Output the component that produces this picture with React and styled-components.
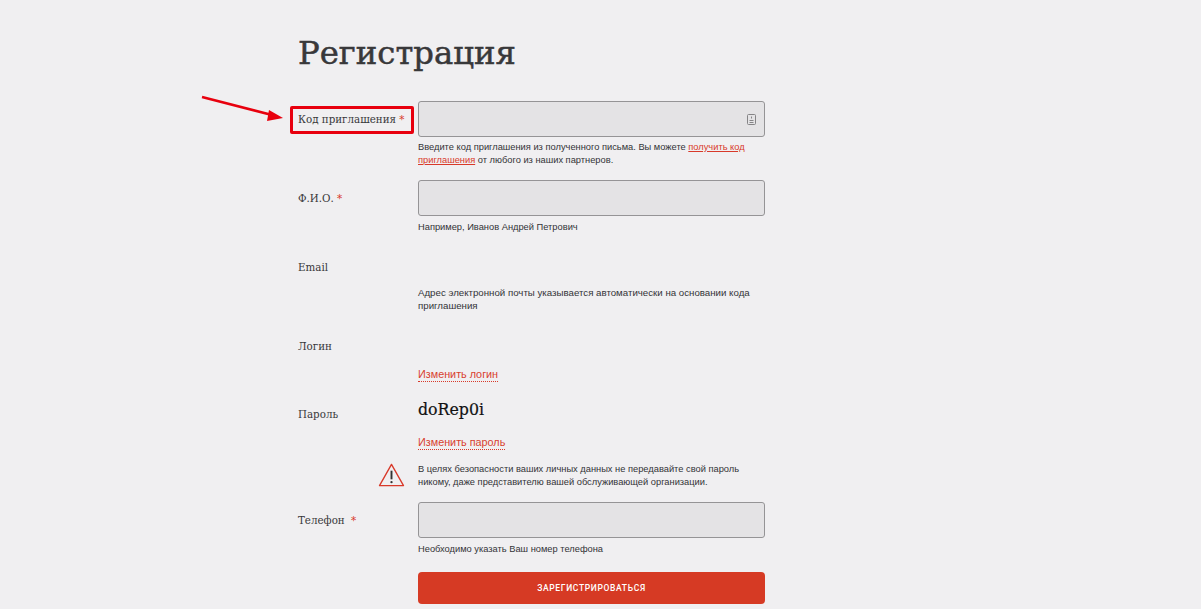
import React from "react";
import styled, { createGlobalStyle } from "styled-components";

const Global = createGlobalStyle`
  html, body { margin: 0; padding: 0; background: #f0eff1; height: 609px; overflow: hidden; }
  body { font-family: "Liberation Sans", Arial, sans-serif; color: #3a3a3c; }
`;
const Page = styled.main`
  position: relative;
  width: 1201px;
  height: 609px;
  padding: 0 0 0 298px;
  box-sizing: border-box;
  overflow: hidden;
`;
const Title = styled.h1`
  margin: 0;
  padding-top: 34px;
  height: 101px;
  box-sizing: border-box;
  font: 400 32.3px/39px "DejaVu Serif", serif;
  -webkit-text-stroke: 0.5px #38383a;
  color: #38383a;
`;
const Row = styled.div`
  display: grid;
  grid-template-columns: 120px 347px;
  width: 467px;
  margin-top: ${(p) => p.$top || 0}px;
`;
const Label = styled.label`
  position: relative;
  font: 400 10.3px/14px "DejaVu Serif", serif;
  color: #38383a;
  padding-top: ${(p) => p.$pad ?? 11}px;
  height: 14px;
`;
const Star = styled.span`
  color: #d8392a;
  margin-left: ${(p) => p.$gap || 0}px;
`;
const Field = styled.div`
  display: flex;
  flex-direction: column;
  min-width: 0;
`;
const Input = styled.div`
  display: flex;
  align-items: center;
  justify-content: flex-end;
  height: 36px;
  box-sizing: border-box;
  padding-right: 8px;
  background: #e4e3e5;
  border: 1px solid #959496;
  border-radius: 3px;
`;
const Hint = styled.p`
  margin: ${(p) => p.$top ?? 5}px 0 0;
  font-size: ${(p) => p.$size || 9.3}px;
  line-height: 13px;
  color: #333337;
`;
const Inline = styled.a`
  color: #d8392a;
  text-decoration: underline;
`;
const DashedLink = styled.a`
  align-self: flex-start;
  font-size: 10.8px;
  line-height: 13px;
  color: #d8412f;
  border-bottom: 1px dotted #d8392a;
  margin-top: ${(p) => p.$top || 0}px;
`;
const Code = styled.div`
  font: 400 15.8px/20px "DejaVu Serif", serif;
  -webkit-text-stroke: 0.2px #111;
  color: #111;
`;
const Warning = styled.div`
  position: relative;
  display: flex;
`;
const WarnIcon = styled.svg`
  position: absolute;
  left: -40px;
  top: 1px;
  width: 27px;
  height: 24px;
`;
const Submit = styled.button`
  width: 347px;
  height: 32px;
  border: 0;
  border-radius: 4px;
  background: #d63a24;
  color: #fff;
  font: 500 8.5px/32px "Roboto", sans-serif;
  letter-spacing: 0.65px;
  padding: 0;
`;
const Highlight = styled.div`
  position: absolute;
  left: 290px;
  top: 106px;
  width: 124px;
  height: 28px;
  box-sizing: border-box;
  border: 3px solid #e8000e;
  border-radius: 2px;
`;
const Arrow = styled.svg`
  position: absolute;
  left: 198px;
  top: 92px;
  width: 92px;
  height: 34px;
`;

export default function App() {
  return (
    <Page>
      <Global />
      <Title>Регистрация</Title>
      <Row>
        <Label>Код приглашения <Star>*</Star></Label>
        <Field>
          <Input>
            <svg width="9" height="11" viewBox="0 0 9 11" fill="none" stroke="#858486" strokeWidth="1">
              <rect x="0.5" y="0.5" width="8" height="10" rx="1" />
              <path d="M4.500 2.500v2M2.500 6.500h4M2.500 8.500h4" />
            </svg>
          </Input>
          <Hint $top={4}>
            Введите код приглашения из полученного письма. Вы можете <Inline>получить код приглашения</Inline> от любого из наших партнеров.
          </Hint>
        </Field>
      </Row>
      <Row $top={13}>
        <Label>Ф.И.О. <Star>*</Star></Label>
        <Field>
          <Input />
          <Hint>Например, Иванов Андрей Петрович</Hint>
        </Field>
      </Row>
      <Row $top={26}>
        <Label $pad={0}>Email</Label>
        <Field>
          <Hint $top={26} $size={9.7}>Адрес электронной почты указывается автоматически на основании кода приглашения</Hint>
        </Field>
      </Row>
      <Row $top={27}>
        <Label $pad={0}>Логин</Label>
        <Field>
          <DashedLink $top={29}>Изменить логин</DashedLink>
        </Field>
      </Row>
      <Row $top={18}>
        <Label $pad={7}>Пароль</Label>
        <Field>
          <Code>doRep0i</Code>
          <DashedLink $top={16}>Изменить пароль</DashedLink>
        </Field>
      </Row>
      <Row $top={12}>
        <span />
        <Warning>
          <WarnIcon viewBox="0 0 28 25" fill="none">
            <path d="M14 1.500 1.500 23.500h25Z" stroke="#d8392a" strokeWidth="1.4" strokeLinejoin="round" />
            <path d="M14 8v9" stroke="#333" strokeWidth="2" />
            <circle cx="14" cy="20" r="1.2" fill="#333" />
          </WarnIcon>
          <Hint $top={1}>В целях безопасности ваших личных данных не передавайте свой пароль никому, даже представителю вашей обслуживающей организации.</Hint>
        </Warning>
      </Row>
      <Row $top={13}>
        <Label>Телефон <Star $gap={3}>*</Star></Label>
        <Field>
          <Input />
          <Hint>Необходимо указать Ваш номер телефона</Hint>
        </Field>
      </Row>
      <Row $top={16}>
        <span />
        <Submit>ЗАРЕГИСТРИРОВАТЬСЯ</Submit>
      </Row>
      <Highlight />
      <Arrow viewBox="0 0 92 34" fill="none">
        <path d="M4 5 74 23" stroke="#e8000e" strokeWidth="2.5" />
        <path d="M85 26 69 29 71 18Z" fill="#e8000e" />
      </Arrow>
    </Page>
  );
}
